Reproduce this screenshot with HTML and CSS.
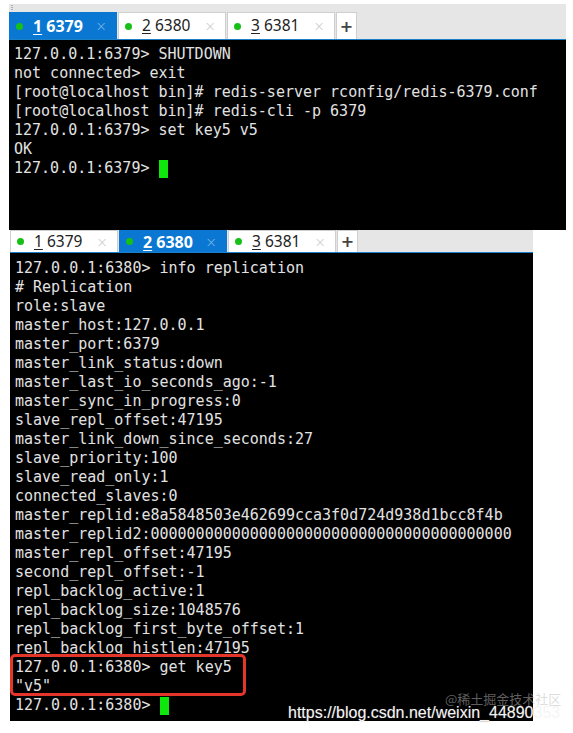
FILE: index.html
```html
<!DOCTYPE html>
<html>
<head>
<meta charset="utf-8">
<link rel="stylesheet" href="styles.css">
</head>
<body>
<div class="win win-top">
  <div class="tabbar tabbar-tall">
    <div class="grip"></div>
    <div class="tabs">
      <div class="tab active"><span class="dot"></span><span class="label"><u>1</u> 6379</span><span class="close">×</span></div>
      <div class="tab"><span class="dot"></span><span class="label"><u>2</u> 6380</span><span class="close">×</span></div>
      <div class="tab"><span class="dot"></span><span class="label"><u>3</u> 6381</span><span class="close">×</span></div>
      <div class="tab-add">+</div>
    </div>
  </div>
  <div class="term term-top">
    <div class="line">127.0.0.1:6379&gt; SHUTDOWN</div>
    <div class="line">not connected&gt; exit</div>
    <div class="line">[root@localhost bin]# redis-server rconfig/redis-6379.conf</div>
    <div class="line">[root@localhost bin]# redis-cli -p 6379</div>
    <div class="line">127.0.0.1:6379&gt; set key5 v5</div>
    <div class="line">OK</div>
    <div class="line">127.0.0.1:6379&gt; <span class="cursor"></span></div>
  </div>
</div>
<div class="win win-bottom">
  <div class="tabbar tabbar-short">
    <div class="tabs">
      <div class="tab"><span class="dot"></span><span class="label"><u>1</u> 6379</span><span class="close">×</span></div>
      <div class="tab active"><span class="dot"></span><span class="label"><u>2</u> 6380</span><span class="close">×</span></div>
      <div class="tab"><span class="dot"></span><span class="label"><u>3</u> 6381</span><span class="close">×</span></div>
      <div class="tab-add">+</div>
    </div>
  </div>
  <div class="term term-bottom">
    <div class="line">127.0.0.1:6380&gt; info replication</div>
    <div class="line"># Replication</div>
    <div class="line">role:slave</div>
    <div class="line">master_host:127.0.0.1</div>
    <div class="line">master_port:6379</div>
    <div class="line">master_link_status:down</div>
    <div class="line">master_last_io_seconds_ago:-1</div>
    <div class="line">master_sync_in_progress:0</div>
    <div class="line">slave_repl_offset:47195</div>
    <div class="line">master_link_down_since_seconds:27</div>
    <div class="line">slave_priority:100</div>
    <div class="line">slave_read_only:1</div>
    <div class="line">connected_slaves:0</div>
    <div class="line">master_replid:e8a5848503e462699cca3f0d724d938d1bcc8f4b</div>
    <div class="line">master_replid2:0000000000000000000000000000000000000000</div>
    <div class="line">master_repl_offset:47195</div>
    <div class="line">second_repl_offset:-1</div>
    <div class="line">repl_backlog_active:1</div>
    <div class="line">repl_backlog_size:1048576</div>
    <div class="line">repl_backlog_first_byte_offset:1</div>
    <div class="line">repl_backlog_histlen:47195</div>
    <div class="line">127.0.0.1:6380&gt; get key5</div>
    <div class="line">"v5"</div>
    <div class="line">127.0.0.1:6380&gt; <span class="cursor"></span></div>
    <div class="highlight"></div>
  </div>
</div>
<div class="watermark">
  <span class="wm-cn">@稀土掘金技术社区</span>
  <span class="wm-url">https://blog.csdn.net/weixin_44890<span class="wm-fade">353</span></span>
</div>
</body>
</html>
```
FILE: styles.css
```css
html, body {
  margin: 0;
  padding: 0;
  background: #ffffff;
  width: 573px;
  height: 733px;
  overflow: hidden;
  position: relative;
}

.win {
  display: flex;
  flex-direction: column;
}

.win-top {
  margin: 4px 0 0 9px;
  width: 557px;
}

.win-bottom {
  margin: 0 0 0 10px;
  width: 523px;
}

.tabbar {
  background: #e6e6e6;
  border-bottom: 1px solid #1c80c8;
  position: relative;
}

.tabbar-tall {
  padding-top: 8px;
}

.grip {
  position: absolute;
  left: 2px;
  top: 1px;
  width: 2px;
  height: 6px;
  background: repeating-linear-gradient(#b0b0b0 0 1px, transparent 1px 2px);
}

.tabs {
  display: flex;
  gap: 1px;
  align-items: stretch;
}

.tabbar-tall .tabs { height: 27px; }
.tabbar-short .tabs { height: 22px; }

.tab {
  width: 108px;
  box-sizing: border-box;
  display: flex;
  align-items: center;
  padding: 0 9px 0 6px;
  background: #ffffff;
  border: 1px solid #cfcfcf;
  border-bottom: none;
  font-family: "Noto Sans", "Open Sans", sans-serif;
  font-size: 15.5px;
  color: #222222;
}

.tab.active {
  background: #0a78d2;
  border-color: #0a78d2;
  color: #ffffff;
  font-weight: bold;
  font-size: 16px;
}

.dot {
  width: 7px;
  height: 7px;
  border-radius: 50%;
  background: #16c016;
  flex: none;
  margin-right: 10px;
}

.label {
  flex: 1;
  white-space: nowrap;
  line-height: 1;
}

.label u {
  text-underline-offset: 2px;
  text-decoration-thickness: 1px;
}

.close {
  color: #c8c8c8;
  font-family: "DejaVu Sans", sans-serif;
  font-size: 14px;
  font-weight: 200;
  line-height: 1;
}

.tab.active .close {
  color: #7fb8e8;
}

.tab-add {
  width: 21px;
  box-sizing: border-box;
  background: #ffffff;
  border: 1px solid #cfcfcf;
  border-bottom: none;
  display: flex;
  align-items: center;
  justify-content: center;
  font-family: "DejaVu Sans", sans-serif;
  font-weight: bold;
  font-size: 16px;
  color: #444444;
}

.term {
  background: #000000;
  color: #e2e2e2;
  font-family: "DejaVu Sans Mono", monospace;
  font-size: 15px;
  line-height: 19px;
  position: relative;
}

.line {
  white-space: pre;
  height: 19px;
}

.term-top {
  height: 190px;
  box-sizing: border-box;
  padding: 5px 5px;
}

.term-bottom {
  height: 468px;
  box-sizing: border-box;
  padding: 6px 5px;
}

.cursor {
  display: inline-block;
  width: 9px;
  height: 18px;
  background: #0ee60e;
  vertical-align: top;
  margin-top: 1px;
}

.highlight {
  position: absolute;
  left: 0px;
  top: 401px;
  width: 236px;
  height: 42px;
  box-sizing: border-box;
  border: 3px solid #e4352b;
  border-radius: 5px;
}

.watermark {
  position: absolute;
  left: 288px;
  top: 688px;
  width: 285px;
  height: 40px;
}

.wm-cn {
  position: absolute;
  left: 157px;
  top: 1px;
  font-family: "Noto Sans CJK SC", sans-serif;
  font-size: 13px;
  color: rgba(190, 190, 190, 0.5);
  white-space: nowrap;
}

.wm-url {
  position: absolute;
  left: 0;
  top: 16px;
  font-family: "Liberation Sans", Arial, sans-serif;
  font-size: 16px;
  color: #f2f2f2;
  white-space: nowrap;
  text-shadow: 0 0 1px #555;
}

.wm-fade {
  color: rgba(235, 235, 235, 0.5);
  text-shadow: none;
}
```
